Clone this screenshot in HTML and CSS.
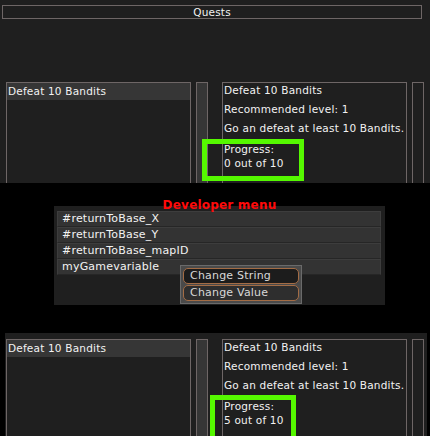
FILE: index.html
```html
<!DOCTYPE html>
<html lang="en">
<head>
  <meta charset="UTF-8" />
  <title>Quests</title>
  <link rel="stylesheet" href="styles.css">
</head>
<body>

<div class="window top-window">
  <div class="title-bar">Quests</div>
  <div class="quest-row">
    <div class="quest-list">
      <div class="quest-item">Defeat 10 Bandits</div>
    </div>
    <div class="scroll filled"></div>
    <div class="quest-detail">
      <p>Defeat 10 Bandits</p>
      <p>Recommended level: 1</p>
      <p>Go an defeat at least 10 Bandits.</p>
      <div class="progress">Progress:<br>0 out of 10</div>
      <div class="mark mark-top"></div>
    </div>
    <div class="scroll"></div>
  </div>
</div>

<div class="dev-band">
  <div class="dev-panel">
    <h2 class="dev-title">Developer menu</h2>
    <div class="var-row">#returnToBase_X</div>
    <div class="var-row">#returnToBase_Y</div>
    <div class="var-row">#returnToBase_mapID</div>
    <div class="var-row">myGamevariable</div>
    <div class="ctx-menu">
      <div class="ctx-btn active">Change String</div>
      <div class="ctx-btn">Change Value</div>
    </div>
  </div>
</div>

<div class="window bottom-window">
  <div class="quest-row">
    <div class="quest-list">
      <div class="quest-item">Defeat 10 Bandits</div>
    </div>
    <div class="scroll filled"></div>
    <div class="quest-detail">
      <p>Defeat 10 Bandits</p>
      <p>Recommended level: 1</p>
      <p>Go an defeat at least 10 Bandits.</p>
      <div class="progress">Progress:<br>5 out of 10</div>
      <div class="mark mark-bottom"></div>
    </div>
    <div class="scroll"></div>
  </div>
</div>

</body>
</html>
```

FILE: styles.css
```css
* {
  margin: 0; padding: 0; box-sizing: border-box;
  font-family: 'DejaVu Sans', sans-serif;
}

body {
  background: #000;
  color: #f2f2f2;
  width: 430px;
  height: 436px;
  overflow: hidden;
  font-size: 10.5px;
  letter-spacing: 0.2px;
}

.window {
  background: #1f1f1f;
  overflow: hidden;
}

.top-window {
  height: 183px;
  padding-top: 5px;
}

.bottom-window {
  height: 103px;
  margin-left: 5px;
  width: 422px;
  padding-top: 6px;
}

.title-bar {
  margin-left: 2px;
  width: 420px;
  height: 14px;
  border: 1px solid #6e6666;
  text-align: center;
  line-height: 12px;
  font-size: 10.5px;
}

.top-window .quest-row {
  margin-top: 63px;
  padding-left: 6px;
}

.bottom-window .quest-row {
  padding-left: 1px;
}

.quest-row {
  display: flex;
  align-items: flex-start;
  height: 160px;
}

.quest-list {
  width: 185px;
  height: 160px;
  border: 1px solid #6e6666;
}

.quest-item {
  background: #363636;
  height: 17px;
  line-height: 16px;
  padding-left: 1px;
}

.scroll {
  width: 12px;
  height: 160px;
  border: 1px solid #6e6666;
  margin-left: 5px;
}

.scroll.filled {
  background: #363636;
}

.quest-detail {
  position: relative;
  width: 185px;
  height: 160px;
  margin-left: 14px;
  border: 1px solid #6e6666;
  padding-left: 1px;
}

.quest-detail p {
  line-height: 15px;
  margin-bottom: 4px;
}

.progress {
  margin-top: 6px;
  line-height: 14px;
}

.mark {
  position: absolute;
  border: 5px solid #55f800;
}

.mark-top {
  left: -21px;
  top: 56px;
  width: 102px;
  height: 42px;
}

.mark-bottom {
  left: -13px;
  top: 55px;
  width: 86px;
  height: 60px;
}

.dev-band {
  height: 150px;
  padding-top: 23px;
}

.dev-panel {
  position: relative;
  margin-left: 54px;
  width: 331px;
  height: 99px;
  background: #1f1f1f;
  padding: 5px 4px 0 3px;
}

.dev-title {
  position: absolute;
  top: -8px;
  left: 0;
  right: 0;
  text-align: center;
  color: #ff0a0a;
  font-size: 12px;
  font-weight: bold;
  line-height: 14px;
  letter-spacing: 0.2px;
}

.var-row {
  height: 16px;
  line-height: 14px;
  background: #333;
  border: 1px solid #3d3d3d;
  border-bottom-color: #262626;
  padding-left: 4px;
  font-size: 11px;
}

.ctx-menu {
  position: absolute;
  left: 126px;
  top: 59px;
  width: 122px;
  background: #4a4a4a;
  border: 1px solid #6a6a6a;
  padding: 1px 2px;
}

.ctx-btn {
  height: 16px;
  margin: 1px 0;
  line-height: 13px;
  padding-left: 6px;
  border: 1px solid #a36c45;
  border-radius: 5px;
  background: #2e2e2e;
  color: #d8d8d8;
  font-size: 11px;
}

.ctx-btn.active {
  background: #1c1c1c;
}
```
